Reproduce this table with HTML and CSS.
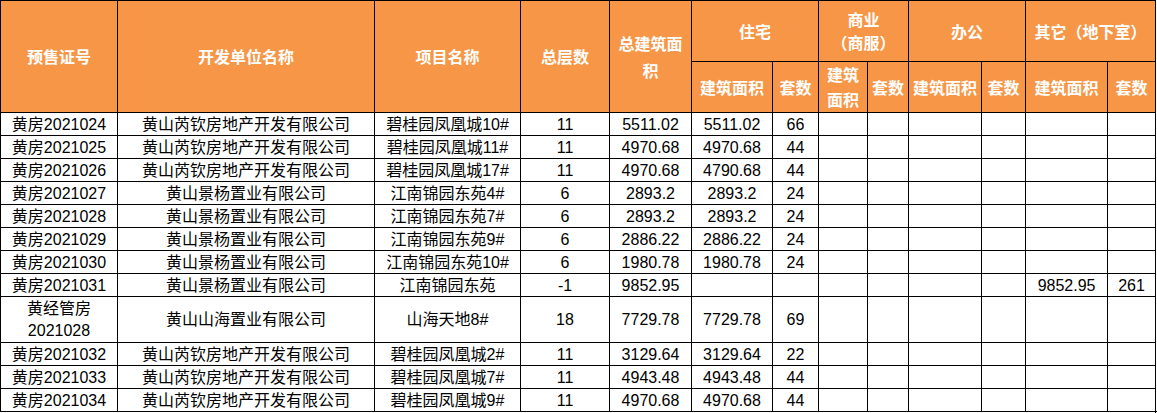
FILE: index.html
```html
<!DOCTYPE html>
<html lang="zh-CN">
<head>
<meta charset="utf-8">
<title>预售证统计表</title>
<link rel="stylesheet" href="styles.css">
</head>
<body>
<table class="grid">
  <colgroup>
    <col class="c1"><col class="c2"><col class="c3"><col class="c4"><col class="c5">
    <col class="c6"><col class="c7"><col class="c8"><col class="c9"><col class="c10">
    <col class="c11"><col class="c12"><col class="c13">
  </colgroup>
  <thead>
    <tr class="h-top">
      <th rowspan="2">预售证号</th>
      <th rowspan="2">开发单位名称</th>
      <th rowspan="2">项目名称</th>
      <th rowspan="2">总层数</th>
      <th rowspan="2">总建筑面<br>积</th>
      <th colspan="2">住宅</th>
      <th colspan="2" class="tight">商业<br>（商服）</th>
      <th colspan="2">办公</th>
      <th colspan="2">其它（地下室）</th>
    </tr>
    <tr class="h-sub">
      <th>建筑面积</th>
      <th>套数</th>
      <th>建筑<br>面积</th>
      <th>套数</th>
      <th>建筑面积</th>
      <th>套数</th>
      <th>建筑面积</th>
      <th>套数</th>
    </tr>
  </thead>
  <tbody>
    <tr><td>黄房2021024</td><td>黄山芮钦房地产开发有限公司</td><td>碧桂园凤凰城10#</td><td>11</td><td>5511.02</td><td>5511.02</td><td>66</td><td></td><td></td><td></td><td></td><td></td><td></td></tr>
    <tr><td>黄房2021025</td><td>黄山芮钦房地产开发有限公司</td><td>碧桂园凤凰城11#</td><td>11</td><td>4970.68</td><td>4970.68</td><td>44</td><td></td><td></td><td></td><td></td><td></td><td></td></tr>
    <tr><td>黄房2021026</td><td>黄山芮钦房地产开发有限公司</td><td>碧桂园凤凰城17#</td><td>11</td><td>4970.68</td><td>4790.68</td><td>44</td><td></td><td></td><td></td><td></td><td></td><td></td></tr>
    <tr><td>黄房2021027</td><td>黄山景杨置业有限公司</td><td>江南锦园东苑4#</td><td>6</td><td>2893.2</td><td>2893.2</td><td>24</td><td></td><td></td><td></td><td></td><td></td><td></td></tr>
    <tr><td>黄房2021028</td><td>黄山景杨置业有限公司</td><td>江南锦园东苑7#</td><td>6</td><td>2893.2</td><td>2893.2</td><td>24</td><td></td><td></td><td></td><td></td><td></td><td></td></tr>
    <tr><td>黄房2021029</td><td>黄山景杨置业有限公司</td><td>江南锦园东苑9#</td><td>6</td><td>2886.22</td><td>2886.22</td><td>24</td><td></td><td></td><td></td><td></td><td></td><td></td></tr>
    <tr><td>黄房2021030</td><td>黄山景杨置业有限公司</td><td>江南锦园东苑10#</td><td>6</td><td>1980.78</td><td>1980.78</td><td>24</td><td></td><td></td><td></td><td></td><td></td><td></td></tr>
    <tr><td>黄房2021031</td><td>黄山景杨置业有限公司</td><td>江南锦园东苑</td><td>-1</td><td>9852.95</td><td></td><td></td><td></td><td></td><td></td><td></td><td>9852.95</td><td>261</td></tr>
    <tr class="tall"><td>黄经管房<br>2021028</td><td>黄山山海置业有限公司</td><td>山海天地8#</td><td>18</td><td>7729.78</td><td>7729.78</td><td>69</td><td></td><td></td><td></td><td></td><td></td><td></td></tr>
    <tr><td>黄房2021032</td><td>黄山芮钦房地产开发有限公司</td><td>碧桂园凤凰城2#</td><td>11</td><td>3129.64</td><td>3129.64</td><td>22</td><td></td><td></td><td></td><td></td><td></td><td></td></tr>
    <tr><td>黄房2021033</td><td>黄山芮钦房地产开发有限公司</td><td>碧桂园凤凰城7#</td><td>11</td><td>4943.48</td><td>4943.48</td><td>44</td><td></td><td></td><td></td><td></td><td></td><td></td></tr>
    <tr><td>黄房2021034</td><td>黄山芮钦房地产开发有限公司</td><td>碧桂园凤凰城9#</td><td>11</td><td>4970.68</td><td>4970.68</td><td>44</td><td></td><td></td><td></td><td></td><td></td><td></td></tr>
  </tbody>
</table>
</body>
</html>
```
FILE: styles.css
```css
html, body {
  margin: 0;
  padding: 0;
  background: #ffffff;
}

.grid {
  border-collapse: collapse;
  table-layout: fixed;
  width: 1158px;
  font-family: "Liberation Sans", "Noto Sans CJK SC", sans-serif;
  font-size: 16px;
  color: #000000;
  border-right: 3px double #000000;
  border-bottom: 3px double #000000;
}

.c1 { width: 117px; }
.c2 { width: 257px; }
.c3 { width: 146px; }
.c4 { width: 89px; }
.c5 { width: 82px; }
.c6 { width: 81px; }
.c7 { width: 46px; }
.c8 { width: 49px; }
.c9 { width: 41px; }
.c10 { width: 73px; }
.c11 { width: 44px; }
.c12 { width: 82px; }
.c13 { width: 49px; }

.grid th,
.grid td {
  border: 1px solid #000000;
  padding: 0;
  text-align: center;
  vertical-align: middle;
  white-space: nowrap;
  overflow: hidden;
}

.grid th {
  background: #f79646;
  color: #ffffff;
  font-family: "Noto Sans CJK SC", sans-serif;
  font-weight: 700;
  line-height: 27px;
}

.grid th.tight {
  line-height: 23px;
}

.h-top { height: 61px; }
.h-sub { height: 51px; }

.grid .h-sub th {
  line-height: 25px;
}

.grid td {
  height: 21px;
  line-height: 21px;
  padding-top: 1px;
}

.grid .tall td {
  height: 44px;
  line-height: 22px;
}
```
